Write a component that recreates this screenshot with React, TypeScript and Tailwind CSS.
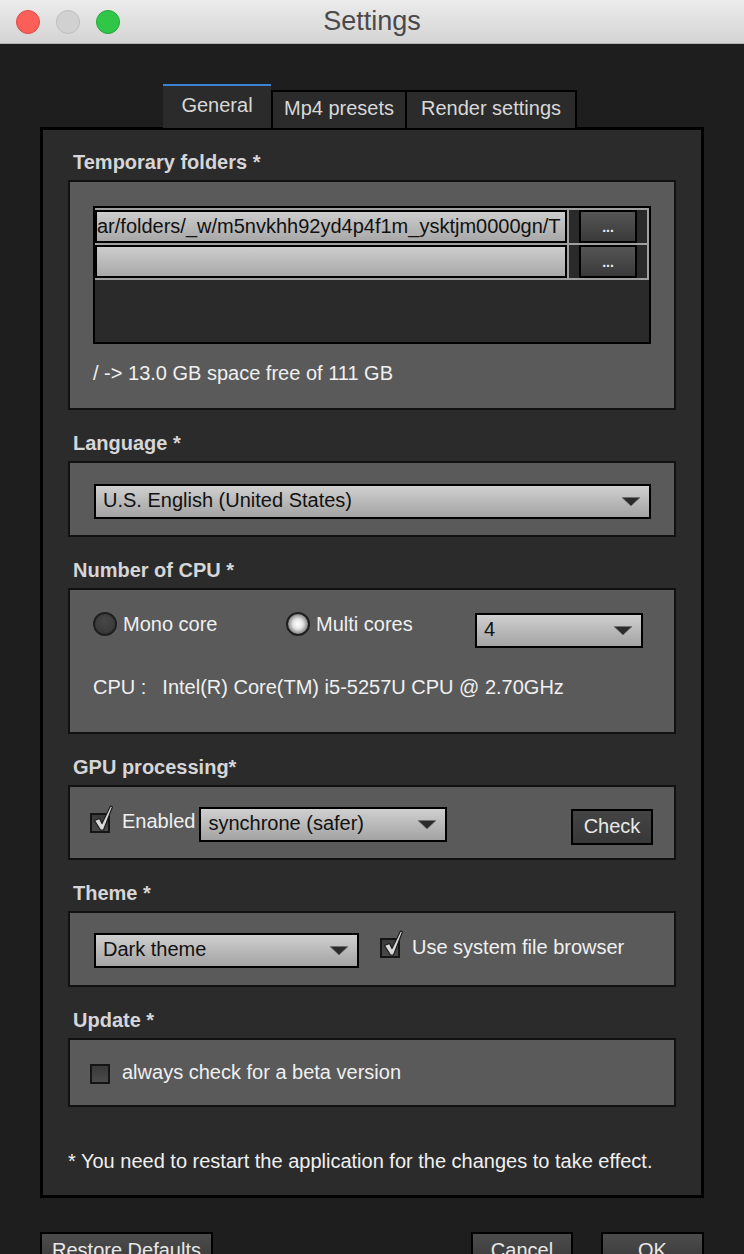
import React from "react";

const FONT = "font-['Liberation_Sans',Arial,Helvetica,sans-serif]";

function Arrow() {
  return (
    <svg width="20" height="11" viewBox="0 0 20 11" className="shrink-0">
      <path d="M1 1.5 L19 1.5 L10 10 Z" fill="#2b2b2b" stroke="#6f6f6f" strokeWidth="0.8" />
    </svg>
  );
}

function Dropdown({ value, className }: { value: string; className: string }) {
  return (
    <div
      className={`flex h-[35px] items-center justify-between border-2 border-black bg-linear-to-b from-[#d0d0d0] to-[#a3a3a3] pl-[7px] pr-[8px] text-[20px] text-[#111] ${className}`}
    >
      <span className="pb-[3px] leading-[24px]">{value}</span>
      <Arrow />
    </div>
  );
}

function Checkbox({ checked }: { checked: boolean }) {
  return (
    <div className="relative h-[20px] w-[20px] shrink-0 border-2 border-[#151515] bg-linear-to-b from-[#3a3a3a] to-[#4a4a4a]">
      {checked ? (
        <svg width="26" height="28" viewBox="0 0 26 28" className="absolute -top-[10px] left-[0px]">
          <path
            d="M2.5 15.5 L7.5 13.5 L10 18.5 L18.5 1 L20.5 1.8 L11.5 25 L8.5 25 Z"
            fill="#d9d9d9"
            stroke="#1c1c1c"
            strokeWidth="1.2"
            strokeLinejoin="round"
          />
        </svg>
      ) : null}
    </div>
  );
}

function Radio({ on }: { on: boolean }) {
  return (
    <div
      className={[
        "h-[24px] w-[24px] shrink-0 rounded-full border-2 border-[#1f1f1f]",
        on
          ? "bg-[radial-gradient(circle,#ffffff_0%,#e4e4e4_35%,#7a7a7a_75%,#2a2a2a_100%)]"
          : "bg-[radial-gradient(circle_at_50%_35%,#474747_0%,#3a3a3a_70%,#2c2c2c_100%)]",
      ].join(" ")}
    />
  );
}

function Section({
  label,
  first,
  children,
  className,
}: {
  label: string;
  first?: boolean;
  children: React.ReactNode;
  className: string;
}) {
  return (
    <div className={first ? "" : "mt-[21px]"}>
      <div className="pl-[5px] text-[20px] font-bold leading-[24px] text-[#d6d6d8]">{label}</div>
      <div className={`mt-[6px] border-2 border-[#111] bg-[#5a5a5a] ${className}`}>{children}</div>
    </div>
  );
}

function FolderRow({ path }: { path: string }) {
  return (
    <div className="flex h-[35px] border-b-2 border-[#a0a0a0]">
      <div className="flex min-w-0 flex-1 items-center overflow-hidden border-2 border-black bg-linear-to-b from-[#cdcdcd] to-[#a8a8a8] pb-[2px] text-[20px] leading-[24px] text-[#111] whitespace-nowrap">
        {path}
      </div>
      <div className="flex w-[82px] shrink-0 border-x-2 border-[#a0a0a0] bg-[#2a2a2a] px-[10px]">
        <div className="flex flex-1 items-center justify-center border-2 border-black bg-linear-to-b from-[#555] to-[#3a3a3a] text-[14px] font-bold leading-none text-[#eee]">
          ...
        </div>
      </div>
    </div>
  );
}

function Button({ label, className }: { label: string; className: string }) {
  return (
    <div
      className={`flex h-[36px] items-center justify-center border-2 border-black bg-linear-to-b from-[#4c4c4c] to-[#383838] text-[20px] text-[#e8e8e8] ${className}`}
    >
      {label}
    </div>
  );
}

export default function App() {
  return (
    <div className={`h-[1254px] w-[744px] overflow-hidden bg-[#1e1e1e] ${FONT}`}>
      {/* title bar */}
      <div className="relative flex h-[44px] items-center justify-center border-b border-[#b4b4b4] bg-linear-to-b from-[#ececec] to-[#d4d4d4]">
        <div className="absolute left-[16px] top-[10px] flex gap-[16px]">
          <span className="h-[24px] w-[24px] rounded-full border border-[#dd4b46] bg-[#fc5f58]" />
          <span className="h-[24px] w-[24px] rounded-full border border-[#bdbdbd] bg-[#d1d1d1]" />
          <span className="h-[24px] w-[24px] rounded-full border border-[#25a538] bg-[#30c748]" />
        </div>
        <span className="text-[27px] leading-none text-[#4a4a4a]">Settings</span>
      </div>

      <div className="px-[40px]">
        {/* tabs */}
        <div className="flex items-end pl-[123px] pt-[40px] text-[20px] text-[#d8d8d8]">
          <div className="flex h-[44px] w-[108px] items-center justify-center border-t-2 border-[#3b82d4] bg-[#2b2b2b] pb-[4px]">
            General
          </div>
          <div className="flex h-[38px] w-[136px] items-center justify-center border-2 border-b-0 border-black bg-[#2b2b2b] pb-[4px]">
            Mp4 presets
          </div>
          <div className="flex h-[38px] w-[170px] items-center justify-center border-2 border-b-0 border-l-0 border-black bg-[#2b2b2b] pb-[4px]">
            Render settings
          </div>
        </div>

        {/* panel */}
        <div className="-mt-[1px] border-[3px] border-black bg-[#2b2b2b] px-[25px] pb-[22px] pt-[20px] text-[20px] text-[#f0f0f0]">
          <Section label="Temporary folders *" first className="px-[23px] pb-[23px] pt-[24px]">
            <div className="h-[138px] border-2 border-black bg-[#2a2a2a]">
              <div className="border-t-2 border-[#a0a0a0]">
                <FolderRow path="ar/folders/_w/m5nvkhh92yd4p4f1m_ysktjm0000gn/T" />
                <FolderRow path="" />
              </div>
            </div>
            <div className="mt-[17px] leading-[24px]">/ -&gt; 13.0 GB space free of 111 GB</div>
          </Section>

          <Section label="Language *" className="pb-[16px] pl-[24px] pr-[23px] pt-[21px]">
            <Dropdown value="U.S. English (United States)" className="w-full" />
          </Section>

          <Section label="Number of CPU *" className="h-[146px] pl-[23px] pt-[22px]">
            <div className="flex items-start">
              <div className="flex w-[193px] items-center leading-[24px]">
                <Radio on={false} />
                <span className="ml-[6px] -mt-[1px]">Mono core</span>
              </div>
              <div className="flex w-[189px] items-center leading-[24px]">
                <Radio on />
                <span className="ml-[6px] -mt-[1px]">Multi cores</span>
              </div>
              <Dropdown value="4" className="mt-[1px] w-[168px]" />
            </div>
            <div className="mt-[27px] flex leading-[24px]">
              <span>CPU :</span>
              <span className="ml-[16px]">Intel(R) Core(TM) i5-5257U CPU @ 2.70GHz</span>
            </div>
          </Section>

          <Section label="GPU processing*" className="flex h-[75px] items-start pl-[20px] pr-[21px] pt-[20px]">
            <div className="mt-[6px]">
              <Checkbox checked />
            </div>
            <span className="ml-[12px] mt-[2px] leading-[24px]">Enabled</span>
            <Dropdown value="synchrone (safer)" className="ml-[4px] w-[248px]" />
            <Button label="Check" className="ml-auto mt-[2px] h-[35px] w-[82px] from-[#444] to-[#383838] pb-[2px]" />
          </Section>

          <Section label="Theme *" className="flex h-[76px] items-start pl-[24px] pt-[20px]">
            <Dropdown value="Dark theme" className="w-[265px]" />
            <div className="ml-[21px] mt-[5px]">
              <Checkbox checked />
            </div>
            <span className="ml-[12px] mt-[2px] leading-[24px]">Use system file browser</span>
          </Section>

          <Section label="Update *" className="flex h-[69px] items-start pl-[20px] pt-[24px]">
            <Checkbox checked={false} />
            <span className="ml-[12px] -mt-[4px] leading-[24px]">always check for a beta version</span>
          </Section>

          <div className="mt-[42px] leading-[24px]">* You need to restart the application for the changes to take effect.</div>
        </div>

        {/* bottom buttons */}
        <div className="mt-[34px] flex">
          <Button label="Restore Defaults" className="w-[173px]" />
          <Button label="Cancel" className="ml-auto w-[102px]" />
          <Button label="OK" className="ml-[28px] w-[103px]" />
        </div>
      </div>
    </div>
  );
}
